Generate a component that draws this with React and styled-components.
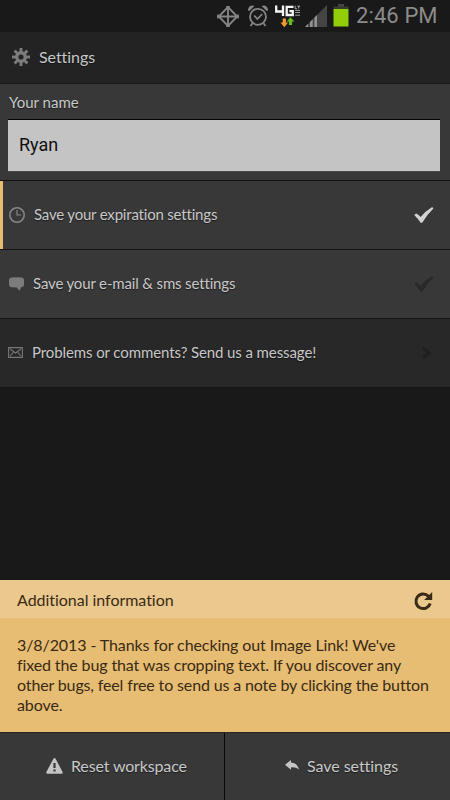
import React from "react";
import styled, { createGlobalStyle } from "styled-components";

const GlobalStyle = createGlobalStyle`
  body {
    margin: 0;
    background: #191919;
  }

  * {
    box-sizing: border-box;
  }
`;

const Screen = styled.div`
  display: flex;
  flex-direction: column;
  width: 450px;
  height: 800px;
  overflow: hidden;
  background: #191919;
  color: #c8c8c8;
  font-family: Lato, "Open Sans", sans-serif;
  font-size: 15px;
  font-variant-ligatures: none;
`;

const Label = styled.span`
  white-space: nowrap;
  line-height: 20px;
  font-size: ${(props) => props.$size || 15}px;
  letter-spacing: ${(props) => props.$spacing || 0}px;
  text-shadow: 0 1px 1px rgba(0, 0, 0, 0.5);
`;

const StatusBar = styled.div`
  display: flex;
  align-items: flex-start;
  height: 32px;
  padding: 4px 0 0 216px;
  background: #191919;
`;

const StatusIcon = styled.svg`
  flex: none;
  height: 24px;
  margin-right: ${(props) => props.$gap}px;
`;

const Time = styled.span`
  color: #8b8b8b;
  font-family: Roboto, sans-serif;
  font-size: 22px;
  line-height: 24px;
  letter-spacing: 0.1px;
  white-space: nowrap;
`;

const Header = styled.header`
  display: flex;
  align-items: center;
  height: 52px;
  padding: 0 0 2px 12px;
  gap: 9px;
  background: #232323;
  border-bottom: 1px solid #1a1a1a;
`;

const NamePanel = styled.div`
  display: flex;
  flex-direction: column;
  height: 97px;
  padding: 8px 10px 0 8px;
  gap: 7px;
  background: #383838;
  border-bottom: 1px solid #111;
`;

const NameLabel = styled(Label)`
  padding-left: 1px;
`;

const NameInput = styled.input`
  width: 432px;
  height: 53px;
  margin: 0;
  padding: 0 10px 3px 11px;
  border: 0;
  border-top: 1px solid #050505;
  border-bottom: 1px solid #4a4a4a;
  border-radius: 0;
  outline: none;
  background: #c4c4c4;
  color: #111;
  font-family: Roboto, sans-serif;
  font-size: 18px;
`;

const Row = styled.div`
  display: flex;
  align-items: center;
  height: 69px;
  padding: 0 ${(props) => props.$right || 16}px 1px ${(props) => props.$left || 9}px;
  background: ${(props) => (props.$dark ? "#282828" : "#383838")};
  border-bottom: 1px solid #151515;
  box-shadow: ${(props) => (props.$active ? "inset 3px 0 #e8bd73" : "none")};
`;

const RowText = styled(Label)`
  flex: 1;
  margin-left: ${(props) => props.$gap}px;
  padding-bottom: 2px;
`;

const Icon = styled.svg`
  flex: none;
  display: block;
`;

const Spacer = styled.div`
  flex: 1;
`;

const Info = styled.section`
  height: 152px;
  background: #e7bc73;
  color: #392b14;
`;

const InfoHeader = styled.div`
  display: flex;
  align-items: center;
  justify-content: space-between;
  height: 38px;
  padding: 4px 17px 0 17px;
  background: #ebc88e;

  ${Label} {
    padding-bottom: 2px;
    text-shadow: none;
  }
`;

const InfoBody = styled.div`
  display: flex;
  flex-direction: column;
  padding: 17px 0 0 17px;

  ${Label} {
    text-shadow: none;
  }
`;

const Footer = styled.footer`
  display: flex;
  height: 68px;
  border-top: 1px solid #252525;
  background: #383838;
`;

const FooterButton = styled.button`
  display: flex;
  align-items: center;
  width: ${(props) => props.$width}px;
  margin: 0;
  padding: 0 0 2px ${(props) => props.$left}px;
  gap: 8px;
  border: 0;
  border-right: ${(props) => (props.$divider ? "1px solid #080808" : "0")};
  background: transparent;
  color: inherit;
  font-family: inherit;
`;

const Check = ({ color }) => (
  <Icon width="20" height="16" viewBox="0 0 20 16" fill={color}>
    <path d="M.2 7.9 2.2 6.4Q4.8 7.6 6.6 10 11.5 4 18.2 0l1.2 1.4Q13 7.5 8.2 15.8H6.6Q4 11.4.2 7.9Z" />
  </Icon>
);

const teeth = [0, 45, 90, 135, 180, 225, 270, 315];

const Gear = () => (
  <Icon width="18" height="18" viewBox="0 0 18 18">
    <circle cx="9" cy="9" r="4.3" fill="none" stroke="#7c7c7c" strokeWidth="3.4" />
    {teeth.map((angle) => (
      <path key={angle} d="M7.7 4.2 7.5 0h3l-.2 4.2z" fill="#7c7c7c" transform={`rotate(${angle} 9 9)`} />
    ))}
  </Icon>
);

const StatusIcons = () => (
  <>
    <StatusIcon $gap={7} width="24" viewBox="0 0 24 24" fill="none" stroke="#858585" strokeWidth="1.9">
      <path d="M12 3.2 21.2 12.5 12 21.8 2.8 12.5Z" />
      <path d="M12 2v21M1 12.5h22" />
      <path d="M10 3h4M10 22h4M2 10.5v4M22 10.5v4" strokeWidth="1.5" />
    </StatusIcon>
    <StatusIcon $gap={6} width="22" viewBox="0 0 22 24" fill="none" stroke="#858585" strokeWidth="1.8">
      <circle cx="11" cy="12.8" r="8" />
      <path d="m7.2 11.5 3.2 3.5 4.8-5M5.5 19.2 3.5 22M16.5 19.2l2 2.8" />
      <path d="M1 6.4C.8 2 5 .3 7.4 2.1L2.4 7ZM21 6.4C21.2 2 17 .3 14.6 2.1l5 4.9Z" fill="#858585" stroke="none" />
    </StatusIcon>
    <StatusIcon $gap={4} width="26" viewBox="0 0 26 24">
      <path d="M1.2 1.5v6h8M8 1.5v10.5M18.5 2.8h-6.8v8.2h6.1V7.2h-3.4" fill="none" stroke="#f5f5f5" strokeWidth="2.3" />
      <path d="M20.2 1.7v3h1.8M22.2 2.2h3M23.7 2.2v2.4M20.2 6.4h4.8M20.2 8.5h4.8M20.2 11.2h4.8" fill="none" stroke="#c8c8c8" strokeWidth=".8" />
      <path d="M7.7 14.5v4H5.5l3.8 4.7 3.8-4.7h-2.2v-4z" fill="#f29a32" />
      <path d="M13.9 21v-3.5h-2.3l3.9-4.3 3.9 4.3h-2.3V21z" fill="#64bc23" />
    </StatusIcon>
    <StatusIcon $gap={6} width="22" viewBox="0 0 22 24">
      <path d="M0 23 22 1v22z" fill="#444" />
      <path d="M0 23 3.2 19.8V23zM5 18l2.7-2.7V23H5zM9.4 13.6l2.6-2.6V23H9.4z" fill="#929292" />
    </StatusIcon>
    <StatusIcon $gap={7} width="16" viewBox="0 0 16 24">
      <path d="M5 0h6v3H5z" fill="#444" />
      <path d="M.5 2.5h15v3H.5z" fill="#383c30" />
      <path d="M.5 5h15v17.5H.5z" fill="#91ce08" />
    </StatusIcon>
  </>
);

const infoLines = [
  { text: "3/8/2013 - Thanks for checking out Image Link! We've", spacing: -0.09 },
  { text: "fixed the bug that was cropping text. If you discover any", spacing: -0.12 },
  { text: "other bugs, feel free to send us a note by clicking the button", spacing: -0.14 },
  { text: "above.", spacing: -0.1 },
];

const App = () => {
  return (
    <Screen>
      <GlobalStyle />
      <StatusBar>
        <StatusIcons />
        <Time>2:46 PM</Time>
      </StatusBar>
      <Header>
        <Gear />
        <Label $size={16} $spacing={-0.05}>Settings</Label>
      </Header>
      <NamePanel>
        <NameLabel>Your name</NameLabel>
        <NameInput defaultValue="Ryan" />
      </NamePanel>
      <Row $active>
        <Icon width="16" height="16" viewBox="0 0 16 16" fill="none" stroke="#858585" strokeWidth="1.6">
          <circle cx="8" cy="8" r="7.2" />
          <path d="M8 3v5h4" strokeWidth="1.2" />
        </Icon>
        <RowText $gap={9} $spacing={-0.19}>Save your expiration settings</RowText>
        <Check color="#d3d3d3" />
      </Row>
      <Row>
        <Icon width="15" height="14" viewBox="0 0 15 14" fill="#7c7c7c">
          <path d="M2.5.5Q7.5-.2 12.5.5 15 .8 15 3v4.5Q15 10 12 10.3L11 13.5Q9 13 8 10.6L2.5 10.3Q0 10 0 7.5V3Q0 .8 2.5.5Z" />
        </Icon>
        <RowText $gap={9} $spacing={-0.15}>Save your e-mail &amp; sms settings</RowText>
        <Check color="#292929" />
      </Row>
      <Row $dark $left={8} $right={18}>
        <Icon width="15" height="11" viewBox="0 0 15 11" fill="none" stroke="#777" strokeWidth="1.1">
          <path d="M.6.6h13.8v9.8H.6zM2 2l5.5 4L13 2M2 9l3.3-3.6M13 9 9.7 5.4" />
        </Icon>
        <RowText $gap={9} $spacing={-0.1}>Problems or comments? Send us a message!</RowText>
        <Icon width="12" height="14" viewBox="0 0 12 14" fill="none" stroke="#1f1f1f" strokeWidth="3">
          <path d="m3 2 6 5-6 5" />
        </Icon>
      </Row>
      <Spacer />
      <Info>
        <InfoHeader>
          <Label $size={16} $spacing={-0.03}>Additional information</Label>
          <Icon width="20" height="20" viewBox="0 0 20 20">
            <path d="M15.5 5.2A7.3 7.3 0 1 0 17.2 12.5" fill="none" stroke="#392b14" strokeWidth="3" />
            <path d="M19.2 1v8h-8z" fill="#392b14" />
          </Icon>
        </InfoHeader>
        <InfoBody>
          {infoLines.map((line) => (
            <Label key={line.text} $size={16} $spacing={line.spacing}>
              {line.text}
            </Label>
          ))}
        </InfoBody>
      </Info>
      <Footer>
        <FooterButton $width={225} $left={46} $divider>
          <Icon width="17" height="16" viewBox="0 0 17 16">
            <path d="M7.3 1Q8.5-.8 9.7 1l6.9 13q.5 1.7-1 1.8H1.4Q0 15.7.4 14Z" fill="#c4c4c4" />
            <path d="M8.5 5v5M8.5 11.5v2" stroke="#383838" strokeWidth="2.2" />
          </Icon>
          <Label $size={16} $spacing={-0.15}>Reset workspace</Label>
        </FooterButton>
        <FooterButton $width={225} $left={60}>
          <Icon width="14" height="11" viewBox="0 0 14 11" fill="#c4c4c4">
            <path d="M0 4.8 6 0v2.5q6 .2 8 7.1-3-2.7-8-2.2v2.4Z" />
          </Icon>
          <Label $size={16} $spacing={-0.05}>Save settings</Label>
        </FooterButton>
      </Footer>
    </Screen>
  );
};

export default App;
